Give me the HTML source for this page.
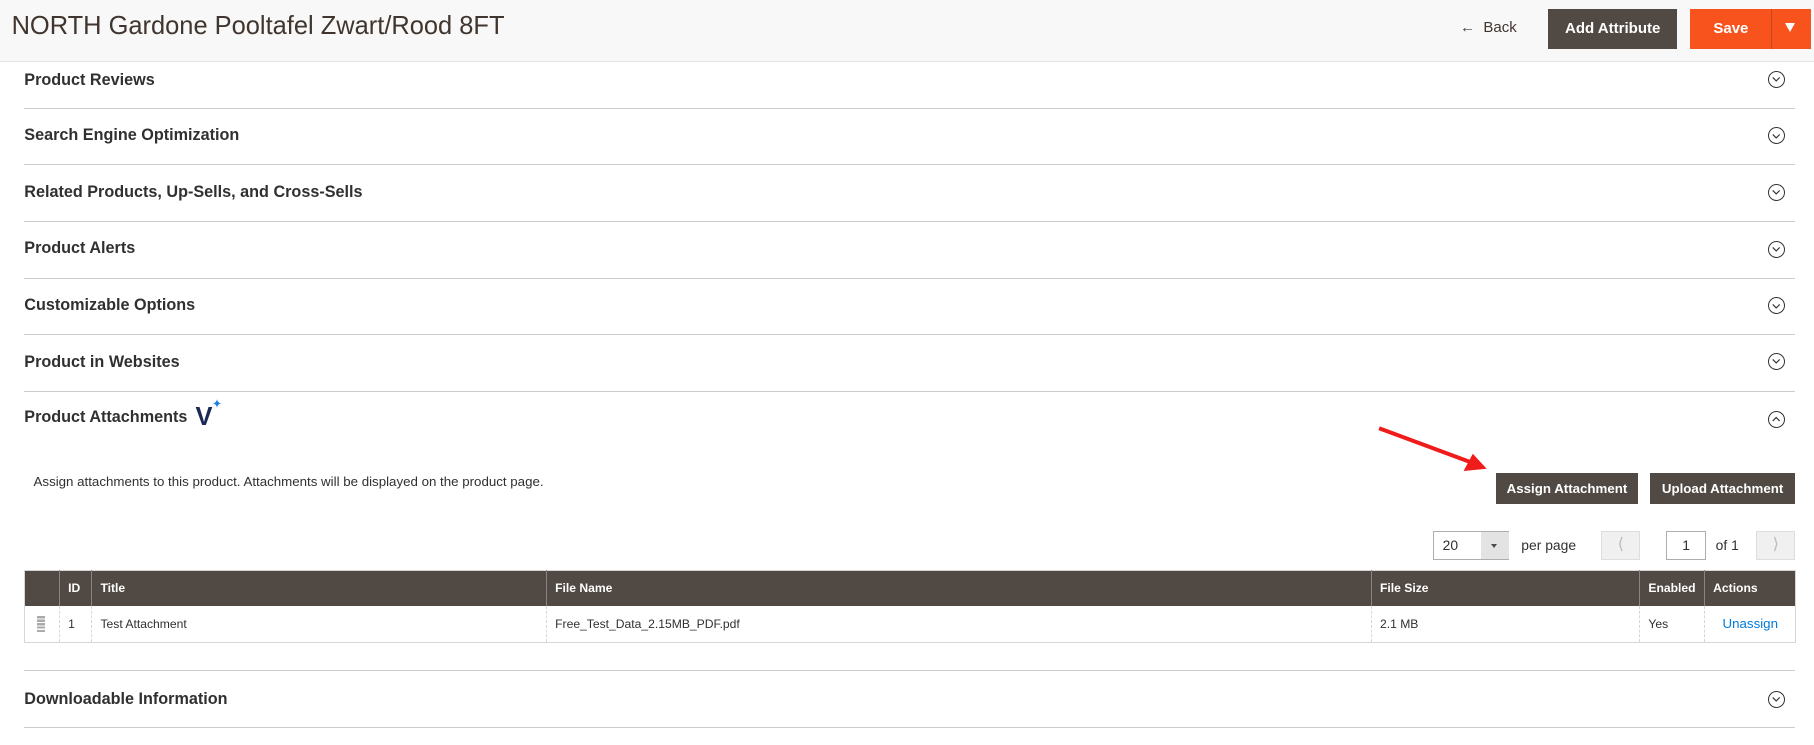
<!DOCTYPE html>
<html><head><meta charset="utf-8"><style>
html,body{margin:0;padding:0;background:#fff;overflow:hidden}
body{width:1814px;height:745px}
#w{position:relative;width:1568px;height:644px;zoom:1.15689;font-family:"Liberation Sans",sans-serif;color:#303030}
.a{position:absolute}
.hdr{left:0;top:0;width:1568px;height:53px;background:#f8f8f8;border-bottom:1px solid #e3e3e3}
.btn{position:absolute;background:#514943;color:#fff;font-weight:bold;display:flex;align-items:center;justify-content:center}
.sec{position:absolute;left:21px;font-weight:bold;font-size:14px;color:#303030}
.ln{position:absolute;left:21px;width:1531px;height:1px;background:#ccc}
.chev{position:absolute;left:1528px;width:13px;height:13px;border:1px solid #333;border-radius:50%}
.chev svg{position:absolute;left:2px;top:2px}
table{table-layout:fixed}
th,td{padding:0 7px;text-align:left;font-size:10.5px;overflow:hidden;white-space:nowrap}
th{color:#fff;font-weight:bold;border-right:1px solid #8a837f}
td{border-right:1px dashed #d6d6d6}
</style></head><body><div id="w">
<div class="a hdr"></div>
<div class="a" style="left:10px;top:9px;font-size:22px;color:#41362f;line-height:28px">NORTH Gardone Pooltafel Zwart/Rood 8FT</div>
<div class="a" style="left:1262px;top:16px;font-size:13px;color:#41362f">&#8592;&nbsp; Back</div>
<div class="btn" style="left:1338px;top:8px;width:112px;height:34px;font-size:13px">Add Attribute</div>
<div class="btn" style="left:1461px;top:8px;width:104px;height:34px;background:#f8531d;font-size:13px;justify-content:flex-start"><span style="margin-left:20px">Save</span></div>
<div class="a" style="left:1531px;top:8px;width:1px;height:34px;background:#c8441a"></div>
<div class="a" style="left:1543px;top:20px;width:0;height:0;border-left:5px solid transparent;border-right:5px solid transparent;border-top:8px solid #fff"></div>

<div class="sec" style="top:61px">Product Reviews</div>
<div class="ln" style="top:93px"></div>
<div class="sec" style="top:109px">Search Engine Optimization</div>
<div class="ln" style="top:142px"></div>
<div class="sec" style="top:158px">Related Products, Up-Sells, and Cross-Sells</div>
<div class="ln" style="top:191px"></div>
<div class="sec" style="top:207px">Product Alerts</div>
<div class="ln" style="top:240px"></div>
<div class="sec" style="top:256px">Customizable Options</div>
<div class="ln" style="top:289px"></div>
<div class="sec" style="top:305px">Product in Websites</div>
<div class="ln" style="top:338px"></div>
<div class="sec" style="top:353px">Product Attachments</div>
<div class="a" style="left:169px;top:348px;font-size:22px;font-weight:bold;color:#1a2a55">V</div>
<div class="a" style="left:183px;top:342px;font-size:11px;color:#1e7fe8">&#10022;</div>
<div class="ln" style="top:579px"></div>
<div class="sec" style="top:596px">Downloadable Information</div>
<div class="ln" style="top:628px"></div>

<div class="chev" style="top:61px"><svg width="9" height="9" viewBox="0 0 9 9"><path d="M1.5 3 L4.5 6 L7.5 3" fill="none" stroke="#333" stroke-width="1"/></svg></div>
<div class="chev" style="top:110px"><svg width="9" height="9" viewBox="0 0 9 9"><path d="M1.5 3 L4.5 6 L7.5 3" fill="none" stroke="#333" stroke-width="1"/></svg></div>
<div class="chev" style="top:159px"><svg width="9" height="9" viewBox="0 0 9 9"><path d="M1.5 3 L4.5 6 L7.5 3" fill="none" stroke="#333" stroke-width="1"/></svg></div>
<div class="chev" style="top:208px"><svg width="9" height="9" viewBox="0 0 9 9"><path d="M1.5 3 L4.5 6 L7.5 3" fill="none" stroke="#333" stroke-width="1"/></svg></div>
<div class="chev" style="top:257px"><svg width="9" height="9" viewBox="0 0 9 9"><path d="M1.5 3 L4.5 6 L7.5 3" fill="none" stroke="#333" stroke-width="1"/></svg></div>
<div class="chev" style="top:305px"><svg width="9" height="9" viewBox="0 0 9 9"><path d="M1.5 3 L4.5 6 L7.5 3" fill="none" stroke="#333" stroke-width="1"/></svg></div>
<div class="chev" style="top:355px"><svg width="9" height="9" viewBox="0 0 9 9"><path d="M1.5 6 L4.5 3 L7.5 6" fill="none" stroke="#333" stroke-width="1"/></svg></div>
<div class="chev" style="top:597px"><svg width="9" height="9" viewBox="0 0 9 9"><path d="M1.5 3 L4.5 6 L7.5 3" fill="none" stroke="#333" stroke-width="1"/></svg></div>

<div class="a" style="left:29px;top:410px;font-size:11.5px;color:#303030">Assign attachments to this product. Attachments will be displayed on the product page.</div>
<svg class="a" style="left:1185px;top:362px" width="110" height="52"><path d="M7 8 L88 38" stroke="#f01c1c" stroke-width="3.5"/><path d="M100 43 L80 45 L88 30 Z" fill="#f01c1c"/></svg>
<div class="btn" style="left:1293px;top:409px;width:123px;height:27px;font-size:11.5px">Assign Attachment</div>
<div class="btn" style="left:1426px;top:409px;width:126px;height:27px;font-size:11.5px">Upload Attachment</div>

<div class="a" style="left:1239px;top:459px;width:65px;height:25px;border:1px solid #adadad;box-sizing:border-box;background:#fff"></div>
<div class="a" style="left:1280px;top:460px;width:24px;height:23px;background:#e3e3e3"></div>
<div class="a" style="left:1289px;top:470px;border-left:3px solid transparent;border-right:3px solid transparent;border-top:4px solid #514943;width:0;height:0"></div>
<div class="a" style="left:1247px;top:464px;font-size:12px">20</div>
<div class="a" style="left:1315px;top:464px;font-size:12px">per page</div>
<div class="a" style="left:1384px;top:459px;width:34px;height:25px;background:#f0f0f0;border:1px solid #ddd;box-sizing:border-box;color:#bbb;font-size:14px;text-align:center;line-height:22px">&#10216;</div>
<div class="a" style="left:1440px;top:459px;width:35px;height:25px;border:1px solid #adadad;box-sizing:border-box;font-size:12px;text-align:center;line-height:23px">1</div>
<div class="a" style="left:1483px;top:464px;font-size:12px">of 1</div>
<div class="a" style="left:1518px;top:459px;width:34px;height:25px;background:#f0f0f0;border:1px solid #ddd;box-sizing:border-box;color:#bbb;font-size:14px;text-align:center;line-height:22px">&#10217;</div>

<table class="a" style="left:21px;top:493px;width:1531px;border-collapse:collapse;border:1px solid #d6d6d6">
<colgroup><col style="width:30px"><col style="width:28px"><col style="width:393px"><col style="width:713px"><col style="width:232px"><col style="width:56px"><col style="width:79px"></colgroup>
<tr style="background:#514943;height:30px"><th></th><th>ID</th><th>Title</th><th>File Name</th><th>File Size</th><th>Enabled</th><th style="border-right:none">Actions</th></tr>
<tr style="height:32px;border-bottom:1px solid #d6d6d6"><td><div style="width:7px;height:14px;background:repeating-linear-gradient(#aaa 0 2px,transparent 2px 3px);margin-left:3px"></div></td><td>1</td><td>Test Attachment</td><td>Free_Test_Data_2.15MB_PDF.pdf</td><td>2.1 MB</td><td>Yes</td><td style="color:#007bdb;font-size:11.5px;text-align:center;border-right:none">Unassign</td></tr>
</table>
</div></body></html>
